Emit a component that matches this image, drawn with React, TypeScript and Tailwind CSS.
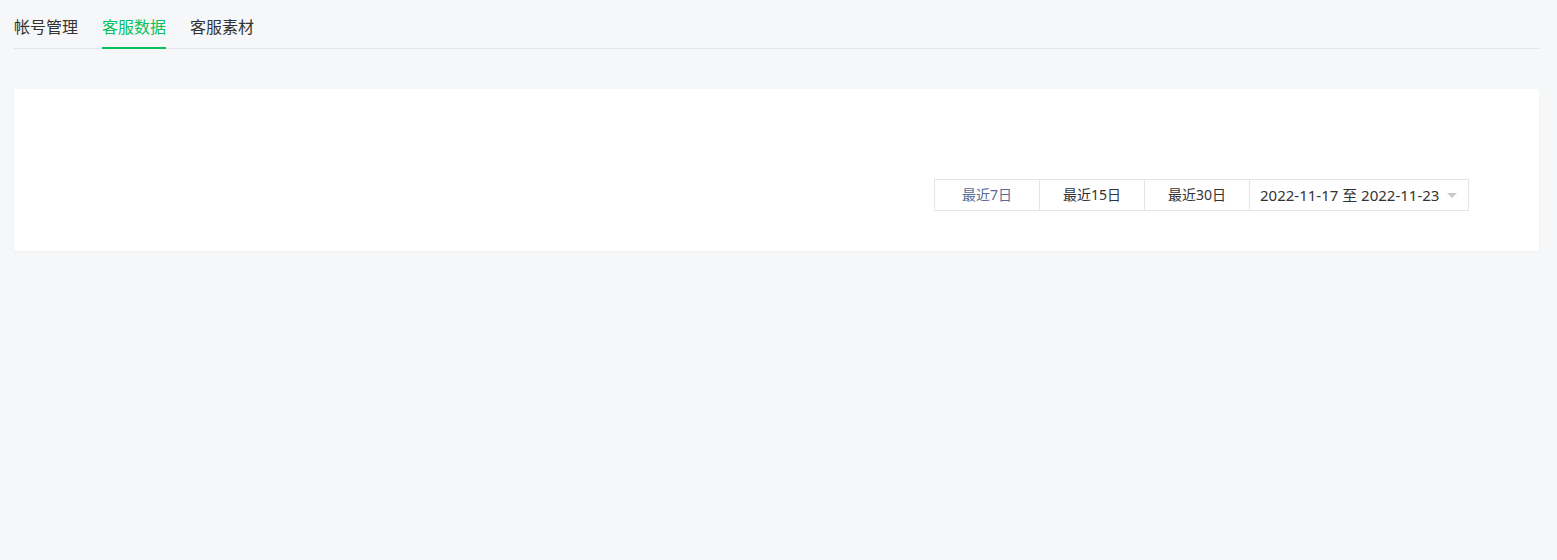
export default function App() {
  const font = { fontFamily: '"Noto Sans", "Noto Sans CJK SC", sans-serif' };
  return (
    <div className="min-h-[560px] w-full bg-[#f6f7f9] pl-[14px] pr-[18px]" style={font}>
      <div className="flex gap-6 border-b border-[#e3e4e8]">
        <div className="-mb-px border-b-2 border-transparent pt-[15px] pb-[8px] text-base leading-6 text-[#333]">帐号管理</div>
        <div className="-mb-px border-b-2 border-[#07c160] pt-[15px] pb-[8px] text-base leading-6 text-[#07c160]">客服数据</div>
        <div className="-mb-px border-b-2 border-transparent pt-[15px] pb-[8px] text-base leading-6 text-[#333]">客服素材</div>
      </div>
      <div className="mt-10 flex justify-end rounded-[2px] bg-white pt-[90px] pb-10 pr-[70px] shadow-[0_1px_2px_rgba(0,0,0,0.04)]">
        <div className="flex h-8 border border-[#e4e5e9]">
          <div className="flex w-[104px] items-center justify-center text-sm text-[#576b95]">最近7日</div>
          <div className="flex w-[105px] items-center justify-center border-l border-[#e4e5e9] text-sm text-[#333]">最近15日</div>
          <div className="flex w-[105px] items-center justify-center border-l border-[#e4e5e9] text-sm text-[#333]">最近30日</div>
          <div className="flex w-[219px] items-center border-l border-[#e4e5e9] pl-[10px] pr-[11px] text-[15px] text-[#333]">
            <span className="flex-1">2022-11-17 至 2022-11-23</span>
            <span className="h-0 w-0 border-x-[5px] border-t-[5px] border-x-transparent border-t-[#c8c9cc]" />
          </div>
        </div>
      </div>
    </div>
  );
}
